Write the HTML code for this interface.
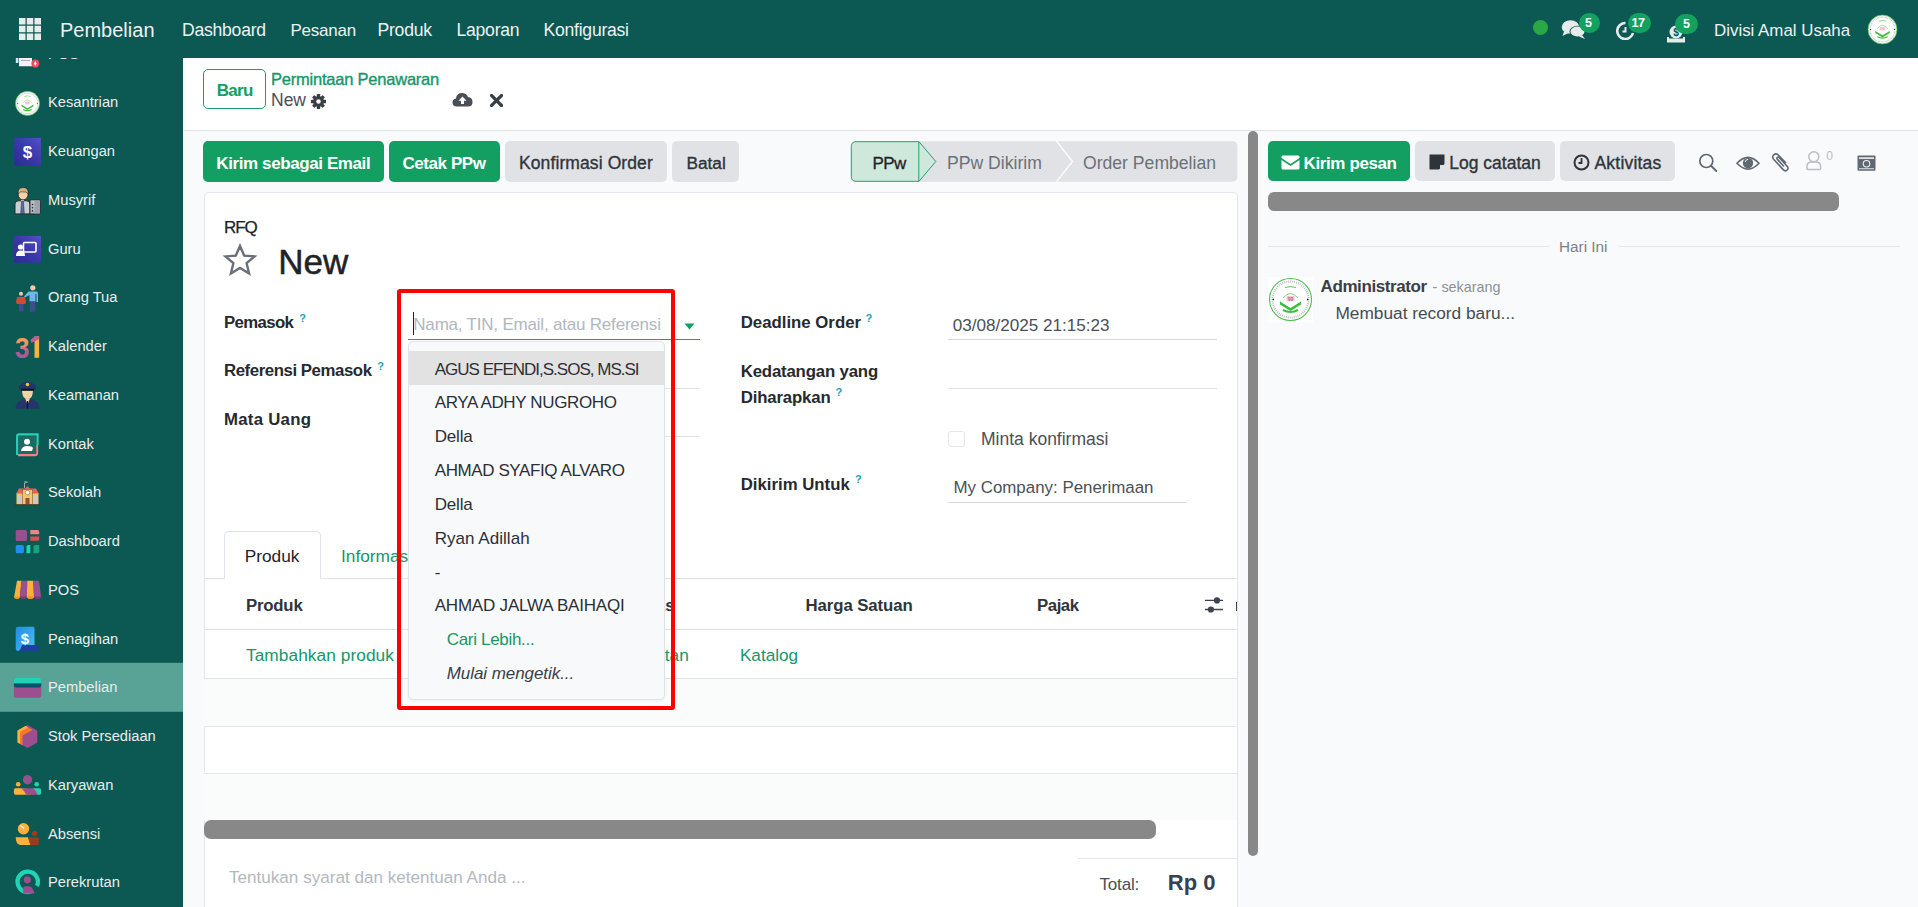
<!DOCTYPE html>
<html><head><meta charset="utf-8">
<style>
*{box-sizing:border-box}
html,body{margin:0;padding:0}
body{width:1918px;height:907px;overflow:hidden;position:relative;font-family:"Liberation Sans",sans-serif;background:#f9fafb;color:#212529}
.a{position:absolute}
.t{position:absolute;line-height:1;white-space:nowrap}
#hdr{left:0;top:0;width:1918px;height:58px;background:#0c5853}
#side{left:0;top:58px;width:183px;height:849px;background:#0c5853;overflow:hidden}
.btn{position:absolute;border-radius:5px;height:41px}
.g{background:#139f62}
.gr{background:#e0e2e6}
.lbl{font-weight:bold;color:#1d2125}
.q{position:absolute;font-size:11px;color:#1ba2b5;font-weight:bold;line-height:1}
.val{color:#4a5057}
</style></head><body>
<div class="a" style="left:183px;top:58px;width:1735px;height:72px;background:#fff;"></div>
<div class="a" style="left:183px;top:130px;width:1735px;height:1px;background:#dfe2e6;"></div>
<div class="a" style="left:203px;top:69px;width:63px;height:40px;border:1px solid #1c9d66;border-radius:5px"></div>
<div class="t" style="left:216.7px;top:82.00px;font-size:17px;color:#139f62;font-weight:bold;letter-spacing:-0.68px">Baru</div>
<div class="t" style="left:271px;top:71.00px;font-size:16.5px;color:#17966a;letter-spacing:-0.22px;-webkit-text-stroke:0.35px #17966a">Permintaan Penawaran</div>
<div class="t" style="left:271px;top:92.00px;font-size:17.5px;color:#495057">New</div>
<svg class="a" style="left:311px;top:94px" width="15" height="15" viewBox="0 0 16 16">
  <g fill="#3a3f46" transform="translate(8 8)">
    <rect x="-1.8" y="-8" width="3.6" height="16" rx="0.6"/>
    <rect x="-1.8" y="-8" width="3.6" height="16" rx="0.6" transform="rotate(45)"/>
    <rect x="-1.8" y="-8" width="3.6" height="16" rx="0.6" transform="rotate(90)"/>
    <rect x="-1.8" y="-8" width="3.6" height="16" rx="0.6" transform="rotate(135)"/>
    <circle r="5.8"/>
  </g>
  <circle cx="8" cy="8" r="2.4" fill="#fff"/>
</svg>
<svg class="a" style="left:452px;top:92px" width="21" height="15" viewBox="0 0 21 15">
  <path d="M5 14.5 Q0.5 14.5 0.5 10.5 Q0.5 7 4 6.5 Q4.5 1 10 1 Q14.5 1 16 5 Q20.5 5.5 20.5 10 Q20.5 14.5 16 14.5Z" fill="#4a4f57"/>
  <path d="M10.5 4.5 L14.5 8.8 L12 8.8 L12 12 L9 12 L9 8.8 L6.5 8.8Z" fill="#fff"/>
</svg>
<svg class="a" style="left:489.5px;top:93.5px" width="13" height="13" viewBox="0 0 13 13">
  <path d="M1.5 1.5 L11.5 11.5 M11.5 1.5 L1.5 11.5" stroke="#3a3f46" stroke-width="3.2" stroke-linecap="square"/>
</svg>
<div class="btn g" style="left:203px;top:141px;width:181px"></div>
<div class="t" style="left:216.3px;top:155.00px;font-size:17px;color:#fff;font-weight:bold;letter-spacing:-0.4px">Kirim sebagai Email</div>
<div class="btn g" style="left:389px;top:141px;width:110.5px"></div>
<div class="t" style="left:402.5px;top:155.00px;font-size:17px;color:#fff;font-weight:bold;letter-spacing:-0.44px">Cetak PPw</div>
<div class="btn gr" style="left:505px;top:141px;width:161.5px"></div>
<div class="t" style="left:519px;top:155.00px;font-size:17.5px;color:#2f343a;letter-spacing:0.1px;-webkit-text-stroke:0.35px #2f343a">Konfirmasi Order</div>
<div class="btn gr" style="left:672px;top:141px;width:67px"></div>
<div class="t" style="left:686.4px;top:155.00px;font-size:17.3px;color:#2f343a;-webkit-text-stroke:0.35px #2f343a">Batal</div>
<svg class="a" style="left:850px;top:140px" width="390" height="44" viewBox="850 140 390 44">
  <path d="M918 141.2 L1232 141.2 Q1237.4 141.2 1237.4 146.5 L1237.4 176.5 Q1237.4 181.7 1232 181.7 L918 181.7Z" fill="#e0e2e6"/>
  <path d="M1056.5 141.2 L1072.5 161.5 L1056.5 181.7" fill="none" stroke="#fff" stroke-width="1.3"/>
  <path d="M856 141.7 L919 141.7 L935.8 161.5 L919 181.3 L856 181.3 Q851.3 181.3 851.3 176.5 L851.3 146.5 Q851.3 141.7 856 141.7Z" fill="#cfe8dc" stroke="#22a06b" stroke-width="1"/>
  <path d="M918.8 141.7 L918.8 181.3" stroke="#22a06b" stroke-width="1"/>
</svg>
<div class="t" style="left:872.4px;top:155.00px;font-size:17px;color:#1f2328;letter-spacing:-0.55px;-webkit-text-stroke:0.3px #1f2328">PPw</div>
<div class="t" style="left:947px;top:155.00px;font-size:17.6px;color:#6c7178">PPw Dikirim</div>
<div class="t" style="left:1083px;top:155.00px;font-size:17.6px;color:#6c7178">Order Pembelian</div>
<div class="a" style="left:1248.3px;top:131px;width:9.7px;height:725px;background:#888;border-radius:5px"></div>
<div class="a" style="left:203.5px;top:192px;width:1034px;height:760px;background:#fff;border:1px solid #e3e6ea;border-radius:5px"></div>
<div class="t" style="left:224px;top:219.00px;font-size:17px;color:#1f2328;letter-spacing:-1.1px;-webkit-text-stroke:0.25px #1f2328">RFQ</div>
<svg class="a" style="left:222px;top:243px" width="36" height="35" viewBox="0 0 36 35">
  <path d="M18 3 L22.2 12.6 L32.5 13.4 L24.6 20.2 L27.1 30.5 L18 25 L8.9 30.5 L11.4 20.2 L3.5 13.4 L13.8 12.6Z" fill="none" stroke="#6b7077" stroke-width="2.4" stroke-linejoin="miter"/>
</svg>
<div class="t" style="left:278.3px;top:244.00px;font-size:35px;color:#1f2328;-webkit-text-stroke:0.5px #1f2328">New</div>
<div class="t" style="left:224px;top:315.00px;font-size:16.8px;color:#262a2f;font-weight:bold;letter-spacing:-0.63px">Pemasok</div>
<div class="q" style="left:299.3px;top:312.5px">?</div>
<div class="t" style="left:224px;top:363.00px;font-size:16.8px;color:#262a2f;font-weight:bold;letter-spacing:-0.43px">Referensi Pemasok</div>
<div class="q" style="left:377.3px;top:360.5px">?</div>
<div class="t" style="left:224px;top:412.00px;font-size:16.8px;color:#262a2f;font-weight:bold;letter-spacing:0.26px">Mata Uang</div>
<div class="a" style="left:408px;top:387.5px;width:292px;height:1px;background:#dfe2e6;"></div>
<div class="a" style="left:408px;top:435.5px;width:292px;height:1px;background:#dfe2e6;"></div>
<div class="t" style="left:740.7px;top:315.00px;font-size:16.8px;color:#262a2f;font-weight:bold">Deadline Order</div>
<div class="q" style="left:865.5px;top:312.5px">?</div>
<div class="t" style="left:952.7px;top:317.00px;font-size:17.1px;color:#4a5057">03/08/2025 21:15:23</div>
<div class="a" style="left:948px;top:338.5px;width:269px;height:1px;background:#d5d9de;"></div>
<div class="t" style="left:740.7px;top:364.00px;font-size:16.8px;color:#262a2f;font-weight:bold;letter-spacing:-0.17px">Kedatangan yang</div>
<div class="t" style="left:740.7px;top:390.00px;font-size:16.8px;color:#262a2f;font-weight:bold;letter-spacing:-0.16px">Diharapkan</div>
<div class="q" style="left:835.5px;top:387px">?</div>
<div class="a" style="left:948px;top:387.5px;width:269px;height:1px;background:#dfe2e6;"></div>
<div class="a" style="left:948px;top:430.5px;width:16.5px;height:16.5px;border:1px solid #e3e6ea;border-radius:3px;background:#fff"></div>
<div class="t" style="left:981px;top:431.00px;font-size:17.5px;color:#4a5057">Minta konfirmasi</div>
<div class="t" style="left:740.7px;top:477.00px;font-size:16.8px;color:#262a2f;font-weight:bold">Dikirim Untuk</div>
<div class="q" style="left:855px;top:474px">?</div>
<div class="t" style="left:953.5px;top:480.00px;font-size:16.9px;color:#4a5057">My Company: Penerimaan</div>
<div class="a" style="left:948px;top:501.5px;width:239px;height:1px;background:#d5d9de;"></div>
<div class="a" style="left:204px;top:578px;width:1033px;height:1px;background:#dfe2e6;"></div>
<div class="a" style="left:224.4px;top:531px;width:96.5px;height:48px;background:#fff;border:1px solid #dfe2e6;border-bottom:none;border-radius:5px 5px 0 0"></div>
<div class="t" style="left:244.7px;top:548.00px;font-size:17.3px;color:#1f2328">Produk</div>
<div class="t" style="left:341px;top:548.00px;font-size:17.3px;color:#17966a">Informasi Lainnya</div>
<div class="t" style="left:246px;top:598.00px;font-size:16.8px;color:#2f3439;font-weight:bold;letter-spacing:-0.22px">Produk</div>
<div class="t" style="left:598px;top:598.00px;font-size:16.8px;color:#2f3439;font-weight:bold">Kuantitas</div>
<div class="t" style="left:805.6px;top:598.00px;font-size:16.8px;color:#2f3439;font-weight:bold;letter-spacing:-0.1px">Harga Satuan</div>
<div class="t" style="left:1037px;top:598.00px;font-size:16.8px;color:#2f3439;font-weight:bold;letter-spacing:-0.45px">Pajak</div>
<svg class="a" style="left:1203px;top:595px" width="22" height="18" viewBox="0 0 22 18">
  <g stroke="#3e444a" stroke-width="1.4"><path d="M1.9 5.4 H20 M1.9 14.5 H20"/></g>
  <circle cx="14" cy="5.4" r="3.1" fill="#3e444a"/><circle cx="7.9" cy="14.5" r="3.1" fill="#3e444a"/>
</svg>
<div class="a" style="left:1235.8px;top:602px;width:1.2px;height:9px;background:#3e444a;"></div>
<div class="a" style="left:204px;top:629px;width:1033px;height:1px;background:#dfe2e6;"></div>
<div class="t" style="left:246px;top:647.00px;font-size:17.3px;color:#17966a;letter-spacing:0.06px">Tambahkan produk</div>
<div class="t" style="left:538px;top:647.00px;font-size:17.3px;color:#17966a">Tambahkan catatan</div>
<div class="t" style="left:739.9px;top:647.00px;font-size:17.2px;color:#17966a">Katalog</div>
<div class="a" style="left:204px;top:678px;width:1033px;height:1px;background:#dfe2e6;"></div>
<div class="a" style="left:204px;top:679px;width:1033px;height:47px;background:#fafbfb;"></div>
<div class="a" style="left:204px;top:726px;width:1033px;height:1px;background:#e3e6ea;"></div>
<div class="a" style="left:204px;top:773px;width:1033px;height:1px;background:#e3e6ea;"></div>
<div class="a" style="left:204px;top:774px;width:1033px;height:46px;background:#fafbfb;"></div>
<div class="a" style="left:204px;top:820px;width:952px;height:18.6px;background:#888;border-radius:7px"></div>
<div class="a" style="left:1078px;top:857.5px;width:159px;height:1px;background:#e3e6ea;"></div>
<div class="t" style="left:229px;top:869.00px;font-size:17.1px;color:#b3b8be">Tentukan syarat dan ketentuan Anda ...</div>
<div class="t" style="left:1099.4px;top:876.00px;font-size:17px;color:#4a5057;letter-spacing:-0.14px">Total:</div>
<div class="t" style="left:1167.8px;top:872.00px;font-size:22px;color:#374151;font-weight:bold">Rp 0</div>
<div class="btn g" style="left:1268px;top:141.2px;width:141.7px;height:40.3px"></div>
<svg class="a" style="left:1280.5px;top:154.5px" width="19" height="15" viewBox="0 0 19 15">
  <path d="M0.5 2 Q0.5 0.5 2 0.5 L17 0.5 Q18.5 0.5 18.5 2 L18.5 3 L9.5 9 L0.5 3Z" fill="#fff"/>
  <path d="M0.5 5 L9.5 11 L18.5 5 L18.5 13 Q18.5 14.5 17 14.5 L2 14.5 Q0.5 14.5 0.5 13Z" fill="#fff"/>
</svg>
<div class="t" style="left:1303.6px;top:155.00px;font-size:17px;color:#fff;font-weight:bold;letter-spacing:-0.39px">Kirim pesan</div>
<div class="btn gr" style="left:1415.3px;top:141.2px;width:139.3px;height:40.3px"></div>
<svg class="a" style="left:1429px;top:154px" width="16" height="16" viewBox="0 0 16 16">
  <path d="M0.5 0.5 L15.5 0.5 L15.5 10 L10 15.5 L0.5 15.5Z" fill="#2f343a"/>
  <path d="M11 15.5 L11 11 L15.5 11Z" fill="#e0e2e6"/>
</svg>
<div class="t" style="left:1449.3px;top:155.00px;font-size:17.5px;color:#2f343a;-webkit-text-stroke:0.35px #2f343a">Log catatan</div>
<div class="btn gr" style="left:1560.3px;top:141.2px;width:114.5px;height:40.3px"></div>
<svg class="a" style="left:1573px;top:153.5px" width="17" height="17" viewBox="0 0 17 17">
  <circle cx="8.5" cy="8.5" r="7" fill="none" stroke="#2f343a" stroke-width="2"/>
  <path d="M8.5 4 L8.5 9 L5.5 9" fill="none" stroke="#2f343a" stroke-width="1.8"/>
</svg>
<div class="t" style="left:1594.5px;top:155.00px;font-size:17.5px;color:#2f343a;letter-spacing:0.2px;-webkit-text-stroke:0.35px #2f343a">Aktivitas</div>
<svg class="a" style="left:1698px;top:153px" width="20" height="19" viewBox="0 0 20 19">
  <circle cx="8.3" cy="8" r="6.5" fill="none" stroke="#606973" stroke-width="1.7"/>
  <path d="M13 12.8 L18.3 18" stroke="#606973" stroke-width="1.9" stroke-linecap="round"/>
</svg>
<svg class="a" style="left:1735.5px;top:154.5px" width="24" height="16.5" viewBox="0 0 24 16.5">
  <path d="M1 8.2 Q12 -3.5 23 8.2 Q12 20 1 8.2Z" fill="none" stroke="#606973" stroke-width="1.6"/>
  <circle cx="12" cy="8" r="5.2" fill="#606973"/>
  <path d="M9.3 6.8 Q9.8 4.5 12 4.2" fill="none" stroke="#f9fafb" stroke-width="1"/>
</svg>
<svg class="a" style="left:1770px;top:151.5px" width="20" height="21" viewBox="0 0 20 21">
  <path d="M15.5 10.5 L8 2.8 Q6 0.8 3.8 2.8 Q1.6 5 3.6 7.2 L13.2 17.6 Q15 19.8 17 18.2 Q19 16.5 17.2 14.3 L9 5.5 Q8 4.6 7.2 5.5 Q6.5 6.5 7.4 7.4 L13.5 14" fill="none" stroke="#606973" stroke-width="1.6" stroke-linecap="round"/>
</svg>
<svg class="a" style="left:1805px;top:151px" width="18" height="20" viewBox="0 0 18 20">
  <circle cx="8.8" cy="5.8" r="5" fill="none" stroke="#b9bec4" stroke-width="1.5"/>
  <path d="M2 18.5 L2 15.5 Q2 11 6.5 11 L11 11 Q15.6 11 15.6 15.5 L15.6 17.5 Q15.6 18.5 14.6 18.5 L3 18.5 Q2 18.5 2 17.5Z" fill="none" stroke="#b9bec4" stroke-width="1.5"/>
</svg>
<div class="t" style="left:1826.2px;top:150px;font-size:12px;color:#b9bec4">0</div>
<svg class="a" style="left:1856.5px;top:154.5px" width="19" height="16" viewBox="0 0 19 16">
  <rect x="0.5" y="0.5" width="18" height="15.3" rx="1" fill="#606973"/>
  <rect x="2" y="2.3" width="15" height="1.6" fill="#f1f2f4"/>
  <rect x="2" y="13.3" width="15" height="0.9" fill="#f1f2f4"/>
  <circle cx="9.5" cy="8.7" r="3.8" fill="#f1f2f4"/>
  <circle cx="9.5" cy="8.7" r="2.7" fill="#606973"/>
</svg>

<div class="a" style="left:1268px;top:192px;width:571px;height:18.5px;background:#888;border-radius:6px"></div>
<div class="a" style="left:1268px;top:246px;width:280.6px;height:1px;background:#e3e6ea;"></div>
<div class="a" style="left:1619px;top:246px;width:280.6px;height:1px;background:#e3e6ea;"></div>
<div class="t" style="left:1559px;top:239.00px;font-size:15.3px;color:#7b8088">Hari Ini</div>
<svg class="a" style="left:1268px;top:276.5px" width="45" height="45" viewBox="0 0 45 45">
  <rect width="45" height="45" fill="#fff"/>
  <circle cx="22.5" cy="22.5" r="21" fill="#fff" stroke="#46c046" stroke-width="1.1"/>
  <circle cx="22.5" cy="22.5" r="18" fill="none" stroke="#8a8f95" stroke-width="2" stroke-dasharray="0.8 1.2" opacity="0.7"/>
  <circle cx="22.5" cy="22.5" r="15.5" fill="#fff"/>
  <path d="M15 21 Q22.5 12 30 21" fill="none" stroke="#7fd07f" stroke-width="1"/>
  <path d="M17 10.5 Q22.5 8.5 28 10.5" fill="none" stroke="#5cc45c" stroke-width="1"/>
  <rect x="18.5" y="19" width="8" height="5" fill="#f3c6d6"/>
  <text x="22.5" y="23.5" font-family="Liberation Sans" font-size="5" fill="#c0306a" text-anchor="middle">99</text>
  <path d="M12 24.5 L22.5 31 L33 24.5 L33 27.5 L22.5 34 L12 27.5Z" fill="#3cbf3c"/>
  <path d="M15 33 Q22.5 37 30 33" fill="none" stroke="#3cbf3c" stroke-width="2"/>
  <path d="M4 22.5 L6 21.5 L6 23.5Z" fill="#222"/><path d="M41 22.5 L39 21.5 L39 23.5Z" fill="#222"/>
</svg>
<div class="t" style="left:1320.6px;top:278.00px;font-size:17px;color:#3a3f46;font-weight:bold;letter-spacing:-0.42px">Administrator</div>
<div class="t" style="left:1432.6px;top:280.00px;font-size:14.4px;color:#8a9096">- sekarang</div>
<div class="t" style="left:1335.4px;top:305.00px;font-size:17.3px;color:#464c53">Membuat record baru...</div>
<div class="t" style="left:413.3px;top:316.00px;font-size:17px;color:#b1b7be;letter-spacing:-0.2px">Nama, TIN, Email, atau Referensi</div>
<div class="a" style="left:412.5px;top:312px;width:1.2px;height:22.7px;background:#222;"></div>
<svg class="a" style="left:684px;top:323px" width="11" height="7" viewBox="0 0 11 7"><path d="M0.5 0.5 L10.5 0.5 L5.5 6.5Z" fill="#139f62"/></svg>
<div class="a" style="left:408px;top:338.5px;width:292px;height:1.6px;background:#22a06b;"></div>
<div class="a" style="left:408.3px;top:340.8px;width:257px;height:359.3px;background:#f8f9fa;border:1px solid #e0e3e7;border-radius:5px;box-shadow:0 1px 3px rgba(0,0,0,0.06)"></div>
<div class="a" style="left:409.3px;top:350.8px;width:255px;height:34px;background:#e2e2e3;"></div>
<div class="t" style="left:434.7px;top:361.00px;font-size:17px;color:#2b3035;letter-spacing:-0.99px">AGUS EFENDI,S.SOS, MS.SI</div>
<div class="t" style="left:434.7px;top:394.00px;font-size:17px;color:#2b3035;letter-spacing:-0.36px">ARYA ADHY NUGROHO</div>
<div class="t" style="left:434.7px;top:428.00px;font-size:17px;color:#2b3035;letter-spacing:-0.15px">Della</div>
<div class="t" style="left:434.7px;top:462.00px;font-size:17px;color:#2b3035;letter-spacing:-0.4px">AHMAD SYAFIQ ALVARO</div>
<div class="t" style="left:434.7px;top:496.00px;font-size:17px;color:#2b3035;letter-spacing:-0.15px">Della</div>
<div class="t" style="left:434.7px;top:530.00px;font-size:17px;color:#2b3035;letter-spacing:0.04px">Ryan Adillah</div>
<div class="t" style="left:434.7px;top:564.00px;font-size:17px;color:#2b3035">-</div>
<div class="t" style="left:434.7px;top:597.00px;font-size:17px;color:#2b3035;letter-spacing:-0.2px">AHMAD JALWA BAIHAQI</div>
<div class="t" style="left:446.7px;top:631.00px;font-size:17px;color:#17966a;letter-spacing:-0.31px">Cari Lebih...</div>
<div class="t" style="left:446.7px;top:665.00px;font-size:17px;color:#3a3f46;letter-spacing:-0.06px;font-style:italic">Mulai mengetik...</div>
<div class="a" style="left:396.8px;top:289.3px;width:278.7px;height:420.5px;border:4px solid #ff0000;border-radius:3px"></div>
<div id="hdr" class="a">
  <svg class="a" style="left:19px;top:18px" width="22" height="22" viewBox="0 0 22 22">
    <g fill="#e6edeb">
      <rect x="0" y="0" width="6.5" height="6.5"/><rect x="7.75" y="0" width="6.5" height="6.5"/><rect x="15.5" y="0" width="6.5" height="6.5"/>
      <rect x="0" y="7.75" width="6.5" height="6.5"/><rect x="7.75" y="7.75" width="6.5" height="6.5"/><rect x="15.5" y="7.75" width="6.5" height="6.5"/>
      <rect x="0" y="15.5" width="6.5" height="6.5"/><rect x="7.75" y="15.5" width="6.5" height="6.5"/><rect x="15.5" y="15.5" width="6.5" height="6.5"/>
    </g>
  </svg>
  <div class="t" style="left:60px;top:20px;font-size:20px;color:#eef2f1">Pembelian</div>
  <div class="t" style="left:182px;top:22px;font-size:17.6px;letter-spacing:-0.25px;color:#eef2f1">Dashboard</div>
  <div class="t" style="left:290.5px;top:22px;font-size:17.0px;letter-spacing:-0.25px;color:#eef2f1">Pesanan</div>
  <div class="t" style="left:377.5px;top:22px;font-size:17.6px;letter-spacing:-0.25px;color:#eef2f1">Produk</div>
  <div class="t" style="left:456.5px;top:22px;font-size:17.6px;letter-spacing:-0.25px;color:#eef2f1">Laporan</div>
  <div class="t" style="left:543.5px;top:22px;font-size:17.6px;letter-spacing:-0.25px;color:#eef2f1">Konfigurasi</div>
  <div class="a" style="left:1533px;top:20.2px;width:15px;height:15px;border-radius:50%;background:#2aa846"></div>
  <!-- chat -->
  <svg class="a" style="left:1561px;top:19px" width="26" height="21" viewBox="0 0 26 21">
    <ellipse cx="9.5" cy="8" rx="8.8" ry="6.8" fill="#e6ecea"/>
    <path d="M3 12.5 L1.5 17 L7.5 14Z" fill="#e6ecea"/>
    <ellipse cx="16.5" cy="12.5" rx="8" ry="5.8" fill="#0c5853"/>
    <ellipse cx="16.5" cy="12.5" rx="7" ry="5" fill="#e6ecea"/>
    <path d="M21 16 L24 20 L18 17.5Z" fill="#e6ecea"/>
  </svg>
  <div class="a" style="left:1578.8px;top:13px;width:21.6px;height:19.5px;border-radius:10px;background:#12a15e"></div>
  <div class="t" style="left:1585px;top:16.8px;font-size:12.5px;font-weight:bold;color:#fff">5</div>
  <!-- clock -->
  <svg class="a" style="left:1615.5px;top:21px" width="21" height="19" viewBox="0 0 21 19">
    <path d="M17 12 A8 8 0 1 1 9.5 2" fill="none" stroke="#e6ecea" stroke-width="2.6"/>
    <path d="M9.5 6 L9.5 10.5 L6.5 10.5" fill="none" stroke="#e6ecea" stroke-width="2"/>
  </svg>
  <div class="a" style="left:1628.2px;top:13px;width:22.4px;height:20px;border-radius:10px;background:#12a15e"></div>
  <div class="t" style="left:1631.5px;top:16.8px;font-size:12.5px;font-weight:bold;color:#fff;letter-spacing:-0.5px">17</div>
  <!-- money -->
  <svg class="a" style="left:1665.5px;top:23.5px" width="21" height="20" viewBox="0 0 21 20">
    <circle cx="10" cy="8" r="6.5" fill="#e6ecea"/>
    <text x="10" y="12" font-family="Liberation Sans" font-weight="bold" font-size="10" fill="#0c5853" text-anchor="middle">$</text>
    <path d="M1 13 L1 18.5 L19 18.5 L19 13 L17 13 L17 16 L3 16 L3 13Z" fill="#e6ecea"/>
    <rect x="3" y="14.5" width="14" height="2.5" fill="#e6ecea"/>
  </svg>
  <div class="a" style="left:1675.4px;top:14px;width:23px;height:19.8px;border-radius:10px;background:#12a15e"></div>
  <div class="t" style="left:1683px;top:17.8px;font-size:12.5px;font-weight:bold;color:#fff">5</div>
  <div class="t" style="left:1714px;top:23px;font-size:16.9px;color:#eef2f1">Divisi Amal Usaha</div>
  <svg class="a" style="left:1866.5px;top:13.5px" width="31" height="31" viewBox="0 0 45 45"><circle cx="22.5" cy="22.5" r="21" fill="#fff" stroke="#46c046" stroke-width="1.1"/>
  <circle cx="22.5" cy="22.5" r="18" fill="none" stroke="#8a8f95" stroke-width="2" stroke-dasharray="0.8 1.2" opacity="0.7"/>
  <circle cx="22.5" cy="22.5" r="15.5" fill="#fff"/>
  <path d="M15 21 Q22.5 12 30 21" fill="none" stroke="#7fd07f" stroke-width="1"/>
  <path d="M17 10.5 Q22.5 8.5 28 10.5" fill="none" stroke="#5cc45c" stroke-width="1"/>
  <rect x="18.5" y="19" width="8" height="5" fill="#f3c6d6"/>
  <path d="M12 24.5 L22.5 31 L33 24.5 L33 27.5 L22.5 34 L12 27.5Z" fill="#3cbf3c"/>
  <path d="M15 33 Q22.5 37 30 33" fill="none" stroke="#3cbf3c" stroke-width="2"/>
  <path d="M4 22.5 L6 21.5 L6 23.5Z" fill="#222"/><path d="M41 22.5 L39 21.5 L39 23.5Z" fill="#222"/></svg>

</div>
<div id="side" class="a">
<svg class="a" style="left:0;top:0" width="183" height="849" viewBox="0 58 183 849">
  <!-- active row -->
  <rect x="0" y="662.8" width="183" height="49" fill="#58a296"/>
  <!-- CCTV -->
  <rect x="15.8" y="56" width="2.6" height="7" fill="#cfe6f7"/>
  <rect x="19" y="56" width="13" height="10.2" rx="0.5" fill="#f3f1f7"/>
  <rect x="21" y="60" width="9" height="0.7" fill="#8a86a8"/>
  <circle cx="35.3" cy="63.5" r="3.9" fill="#e8525f"/>
  <path d="M35.3 61 L36.6 63.5 L35.3 66 L34 63.5Z" fill="#e9eef5"/>
  <!-- Kesantrian logo -->
<g transform="translate(14.6 90.5) scale(0.5733)"><circle cx="22.5" cy="22.5" r="21" fill="#fff" stroke="#46c046" stroke-width="1.1"/>
  <circle cx="22.5" cy="22.5" r="18" fill="none" stroke="#8a8f95" stroke-width="2" stroke-dasharray="0.8 1.2" opacity="0.7"/>
  <circle cx="22.5" cy="22.5" r="15.5" fill="#fff"/>
  <path d="M15 21 Q22.5 12 30 21" fill="none" stroke="#7fd07f" stroke-width="1"/>
  <path d="M17 10.5 Q22.5 8.5 28 10.5" fill="none" stroke="#5cc45c" stroke-width="1"/>
  <rect x="18.5" y="19" width="8" height="5" fill="#f3c6d6"/>
  <path d="M12 24.5 L22.5 31 L33 24.5 L33 27.5 L22.5 34 L12 27.5Z" fill="#3cbf3c"/>
  <path d="M15 33 Q22.5 37 30 33" fill="none" stroke="#3cbf3c" stroke-width="2"/>
  <path d="M4 22.5 L6 21.5 L6 23.5Z" fill="#222"/><path d="M41 22.5 L39 21.5 L39 23.5Z" fill="#222"/></g>
  <!-- Keuangan -->
  <defs>
    <linearGradient id="gk" x1="0" y1="1" x2="1" y2="0"><stop offset="0" stop-color="#2e2b94"/><stop offset="0.5" stop-color="#3a37a8"/><stop offset="1" stop-color="#5450c6"/></linearGradient>
    <linearGradient id="g31" x1="0" y1="0" x2="0" y2="1"><stop offset="0" stop-color="#f8b23e"/><stop offset="0.45" stop-color="#e78a7a"/><stop offset="0.6" stop-color="#b25a98"/><stop offset="1" stop-color="#a8559b"/></linearGradient>
    <linearGradient id="gp" x1="0" y1="0" x2="1" y2="1"><stop offset="0" stop-color="#1f8ae6"/><stop offset="1" stop-color="#4cc0f7"/></linearGradient>
  </defs>
  <rect x="14.2" y="137.9" width="26.7" height="27.7" fill="url(#gk)"/>
  <text x="27.5" y="157.8" font-family="Liberation Sans" font-weight="bold" font-size="17" fill="#fff" text-anchor="middle">$</text>
  <!-- Musyrif -->
  <path d="M15 213.9 L15 204 Q15 200.8 18.5 200.8 L26.5 200.8 Q30 200.8 30 204 L30 213.9Z" fill="#c9ced6" stroke="#1e2326" stroke-width="0.9"/>
  <path d="M21.6 201.5 L23.4 201.5 L24.3 213.5 L20.7 213.5Z" fill="#4e73ad" stroke="#1e2326" stroke-width="0.5"/>
  <rect x="30" y="199.8" width="10.3" height="14.1" rx="0.8" fill="#b9bec6" stroke="#1e2326" stroke-width="0.9"/>
  <rect x="34.5" y="201" width="5" height="12.5" fill="#9ea4ad"/>
  <circle cx="32.5" cy="204.5" r="0.8" fill="#1e2326"/><circle cx="32.5" cy="207.7" r="0.8" fill="#1e2326"/><circle cx="32.5" cy="210.9" r="0.8" fill="#1e2326"/>
  <rect x="21" y="198" width="3" height="3" fill="#f6d2a8"/>
  <ellipse cx="23.1" cy="194" rx="5.1" ry="5.9" fill="#f6d2a8" stroke="#1e2326" stroke-width="0.9"/>
  <path d="M18 194 Q17.5 187.5 23.1 187.5 Q28.7 187.5 28.2 194 Q26 191 23.5 192 Q21 190.5 18 194Z" fill="#d9b07f" stroke="#1e2326" stroke-width="0.6"/>
  <!-- Guru -->
  <rect x="14" y="236" width="27" height="26.7" fill="url(#gk)"/>
  <rect x="23.5" y="242.5" width="12.5" height="9.5" rx="1" fill="none" stroke="#fff" stroke-width="1.6"/>
  <circle cx="20.5" cy="247" r="2.6" fill="#fff"/>
  <path d="M16 256 Q16 250.5 20.5 250.5 Q25 250.5 25 256Z" fill="#fff"/>
  <!-- Orang Tua -->
  <circle cx="32.8" cy="287.8" r="2.6" fill="#f8c9a6"/>
  <path d="M28.5 291.5 L37 291.5 Q38 292 38 294 L38 302 L36.5 302 L36.5 294 L35.5 294 L35.5 301.5 L29.5 301.5 L29.5 295 L25 297.5 L24 296.5 Z" fill="#71b6e8"/>
  <rect x="29.8" y="301.5" width="5.7" height="10.3" fill="#3e4e8c"/>
  <circle cx="21" cy="293.8" r="2" fill="#f8c9a6"/>
  <path d="M17 297 L25 297 L26 302 L25 304 L17 304 L16 302Z" fill="#d04b38"/>
  <rect x="19" y="304" width="4.5" height="7.5" fill="#3e4e8c"/>
  <!-- Kalender 31 -->
  <text x="15" y="357.8" font-family="Liberation Sans" font-weight="bold" font-size="29" fill="url(#g31)" textLength="14.5" lengthAdjust="spacingAndGlyphs">3</text>
  <rect x="34.5" y="336.5" width="4.6" height="21.3" fill="#f8b23e"/>
  <path d="M30.5 340 L34.5 336.5 L39.1 336.5 L39.1 339 L31.5 343Z" fill="#c0609a"/>
  <!-- Keamanan -->
  <path d="M15.4 408.7 Q16 399.5 27.5 398.5 Q39 399.5 39.7 408.7Z" fill="#23356a"/>
  <path d="M25 398.5 L30 398.5 L27.5 404Z" fill="#f3d2a8"/>
  <rect x="27" y="401" width="1" height="7.7" fill="#111"/>
  <path d="M22 389.5 Q22 399 27.5 399 Q33 399 33 389.5Z" fill="#f3d2a8"/>
  <path d="M18.5 387 Q27.5 376 36.5 387 L35 390 L20 390Z" fill="#23356a"/>
  <rect x="21" y="388.8" width="13" height="2" fill="#111"/>
  <circle cx="27.5" cy="384.5" r="1.8" fill="#f2c230"/>
  <!-- Kontak -->
  <path d="M37 445 L37 453 Q37 455 35 455 L18 455" fill="none" stroke="#f37f7f" stroke-width="2.3"/>
  <path d="M17.2 455 L17.2 436.5 Q17.2 434.5 19.2 434.5 L37.5 434.5 L37.5 445" fill="none" stroke="#25d0b5" stroke-width="2.3"/>
  <rect x="18.3" y="435.6" width="18" height="18.3" fill="#1a6b63"/>
  <circle cx="27" cy="441.8" r="3" fill="#fff"/>
  <path d="M21 451 Q22 446 27 446 Q32.5 446 33 448 L32 451Z" fill="#fff"/>
  <!-- Sekolah -->
  <rect x="24" y="483" width="1" height="5" fill="#aaa"/>
  <path d="M24.5 481 L29 482 L24.5 483.5Z" fill="#9aa"/>
  <path d="M16 494 L19 488.5 L36 488.5 L39 494Z" fill="#e6615e"/>
  <path d="M22 492 L27.5 486 L33 492Z" fill="#e6615e"/>
  <rect x="16.5" y="493.5" width="22" height="11" fill="#f6c46d"/>
  <rect x="22.5" y="489.5" width="10" height="15" fill="#f6c46d" stroke="#6d4a32" stroke-width="0.5"/>
  <circle cx="27.5" cy="492.5" r="2.2" fill="#fff" stroke="#6d4a32" stroke-width="0.5"/>
  <rect x="25.5" y="498" width="4" height="6.5" fill="#8c5047"/>
  <rect x="18" y="496" width="3" height="2.5" fill="#bcd"/><rect x="18" y="500" width="3" height="2.5" fill="#bcd"/>
  <rect x="34" y="496" width="3" height="2.5" fill="#bcd"/><rect x="34" y="500" width="3" height="2.5" fill="#bcd"/>
  <rect x="14.2" y="504.3" width="26.5" height="1.5" fill="#4a3a2e"/>
  <!-- Dashboard -->
  <rect x="15.7" y="529.9" width="11.3" height="11" rx="1.5" fill="#9a4f8f"/>
  <path d="M30.3 530 L37.5 530 Q39.2 530 39.2 532 L39.2 534.3 L30.3 534.3Z" fill="#f08585"/>
  <path d="M30.3 536.5 L39.2 536.5 L39.2 539.5 Q39.2 540.8 37.5 540.8 L30.3 540.8Z" fill="#e84a4e"/>
  <rect x="15.7" y="545" width="8.2" height="8.3" rx="1.5" fill="#1e8ef0"/>
  <path d="M26.5 546.5 Q26.5 545 28.5 545 L30.3 545 L30.3 553.3 L26.5 553.3Z" fill="#23d3b1"/>
  <path d="M33.5 546.5 Q33.5 545 35.5 545 L39.2 545 L39.2 551.5 Q39.2 553.3 37.5 553.3 L33.5 553.3Z" fill="#15a47c"/>
  <!-- POS -->
  <path d="M17 580.8 L21.5 580.8 L19.8 597.5 Q17 600 14 597.5 Z" fill="#fbb13c"/>
  <path d="M21.5 580.8 L27.3 580.8 L26.8 597.5 Q23.3 600 19.8 597.5Z" fill="#9a4f8f"/>
  <path d="M27.3 580.8 L33.3 580.8 L34 597.5 Q30.4 600 26.8 597.5Z" fill="#fbb13c"/>
  <path d="M33.3 580.8 L38 580.8 Q39 580.8 39.2 582 L41.2 597.5 Q37.6 600 34 597.5Z" fill="#9a4f8f"/>
  <path d="M14 596.5 L19.8 596.5 L19.8 597.5 Q17 600.5 14 597.5Z" fill="#f7931e"/>
  <path d="M26.8 596.5 L34 596.5 L34 597.5 Q30.4 600.5 26.8 597.5Z" fill="#f7931e"/>
  <path d="M19.8 596.5 L26.8 596.5 L26.8 597.5 Q23.3 600.5 19.8 597.5Z" fill="#7d3a73"/>
  <path d="M34 596.5 L41.2 596.5 L41.2 597.5 Q37.6 600.5 34 597.5Z" fill="#7d3a73"/>
  <!-- Penagihan -->
  <path d="M21 645 L38.9 645 L38.9 648 Q38.9 650.9 36 650.9 L20 650.9Z" fill="#1d3f9e"/>
  <path d="M18 626.7 L33 626.7 Q34.5 626.7 34.5 628.5 L34.5 645 L22 645 Q20 650.9 18.5 650.9 Q15.7 650.9 15.7 648 L15.7 629 Q15.7 626.7 18 626.7Z" fill="url(#gp)"/>
  <text x="25" y="644" font-family="Liberation Sans" font-weight="bold" font-size="15" fill="#fff" text-anchor="middle">$</text>
  <!-- Pembelian -->
  <rect x="13.9" y="677.9" width="27.3" height="19.8" rx="1.8" fill="#9b4f8e"/>
  <path d="M13.9 679.7 Q13.9 677.9 15.7 677.9 L39.4 677.9 Q41.2 677.9 41.2 679.7 L41.2 683.5 L13.9 683.5Z" fill="#1fd1b8"/>
  <path d="M13.9 683.5 L41.2 683.5 L41.2 685.5 Q41.2 687.5 39 687.5 L16 687.5 Q13.9 687.5 13.9 685.5Z" fill="#0d4f6b"/>
  <!-- Stok -->
  <path d="M17.6 730.5 L27.5 725 L37.3 730.5 L37.3 742.5 L27.5 748.1 L17.6 742.5Z" fill="#9b4f8e"/>
  <path d="M17.6 730.5 L25.5 726.1 L32.5 730 L22.5 735.5 L22.5 745.3 L17.6 742.5Z" fill="#f47a2a"/>
  <path d="M17.6 730.5 L25.5 726.1 L28 727.5 L20 732 L20 743.8 L17.6 742.5Z" fill="#fbb13c"/>
  <!-- Karyawan -->
  <circle cx="27.5" cy="779.8" r="4.7" fill="#9a4f8f"/>
  <circle cx="18.2" cy="784.3" r="2.3" fill="#fbb13c"/>
  <circle cx="36.7" cy="784.3" r="2.3" fill="#23d3b1"/>
  <path d="M15.5 788.2 L22 788.2 Q27 788.2 28 790 L31 794.7 L15.5 794.7 Q13.9 794.7 13.9 793 L13.9 790 Q13.9 788.2 15.5 788.2Z" fill="#fbb13c"/>
  <path d="M21 788.2 L34 788.2 Q37 790.5 38 794.7 L26 794.7 Q24 790 21 788.2Z" fill="#9a4f8f"/>
  <path d="M33 788.2 L39.6 788.2 Q41.2 788.2 41.2 790 L41.2 793 Q41.2 794.7 39.6 794.7 L37.5 794.7 Q36 790 33 788.2Z" fill="#23d3b1"/>
  <!-- Absensi -->
  <circle cx="23.5" cy="828.7" r="5.7" fill="#fbb13c"/>
  <path d="M20.5 825.5 L24 828.5" stroke="#fff" stroke-width="1.2"/>
  <circle cx="34.5" cy="833.3" r="2.6" fill="#9b3b22"/>
  <path d="M15.7 837.3 L28 837.3 L30.5 844.9 L20 844.9 Q15.7 844 15.7 837.3Z" fill="#fbb13c"/>
  <path d="M28 837.3 L37 837.3 Q38.9 837.3 38.9 839.5 L38.9 843 Q38.9 844.9 37 844.9 L30.5 844.9Z" fill="#9b3b22"/>
  <!-- Perekrutan -->
  <path d="M33 890.5 A10.2 10.2 0 1 1 37 886" fill="none" stroke="#23d3b7" stroke-width="4.3"/>
  <circle cx="27.3" cy="879.8" r="3.6" fill="#9b4f8e"/>
  <path d="M22.5 887.5 Q27.3 884.5 32 887.5 L34.5 893.5 L23.5 893.5Z" fill="#9b4f8e"/>
</svg>
<div class="t" style="left:48px;top:-11px;font-size:14.7px;color:#e9eeec">POS</div>
<div class="t" style="left:48px;top:37px;font-size:14.7px;color:#e9eeec">Kesantrian</div>
<div class="t" style="left:48px;top:86px;font-size:14.7px;color:#e9eeec">Keuangan</div>
<div class="t" style="left:48px;top:135px;font-size:14.7px;color:#e9eeec">Musyrif</div>
<div class="t" style="left:48px;top:184px;font-size:14.7px;color:#e9eeec">Guru</div>
<div class="t" style="left:48px;top:232px;font-size:14.7px;color:#e9eeec">Orang Tua</div>
<div class="t" style="left:48px;top:281px;font-size:14.7px;color:#e9eeec">Kalender</div>
<div class="t" style="left:48px;top:330px;font-size:14.7px;color:#e9eeec">Keamanan</div>
<div class="t" style="left:48px;top:379px;font-size:14.7px;color:#e9eeec">Kontak</div>
<div class="t" style="left:48px;top:427px;font-size:14.7px;color:#e9eeec">Sekolah</div>
<div class="t" style="left:48px;top:476px;font-size:14.7px;color:#e9eeec">Dashboard</div>
<div class="t" style="left:48px;top:525px;font-size:14.7px;color:#e9eeec">POS</div>
<div class="t" style="left:48px;top:574px;font-size:14.7px;color:#e9eeec">Penagihan</div>
<div class="t" style="left:48px;top:622px;font-size:14.7px;color:#e9eeec">Pembelian</div>
<div class="t" style="left:48px;top:671px;font-size:14.7px;color:#e9eeec">Stok Persediaan</div>
<div class="t" style="left:48px;top:720px;font-size:14.7px;color:#e9eeec">Karyawan</div>
<div class="t" style="left:48px;top:769px;font-size:14.7px;color:#e9eeec">Absensi</div>
<div class="t" style="left:48px;top:817px;font-size:14.7px;color:#e9eeec">Perekrutan</div>
</div>
</body></html>
